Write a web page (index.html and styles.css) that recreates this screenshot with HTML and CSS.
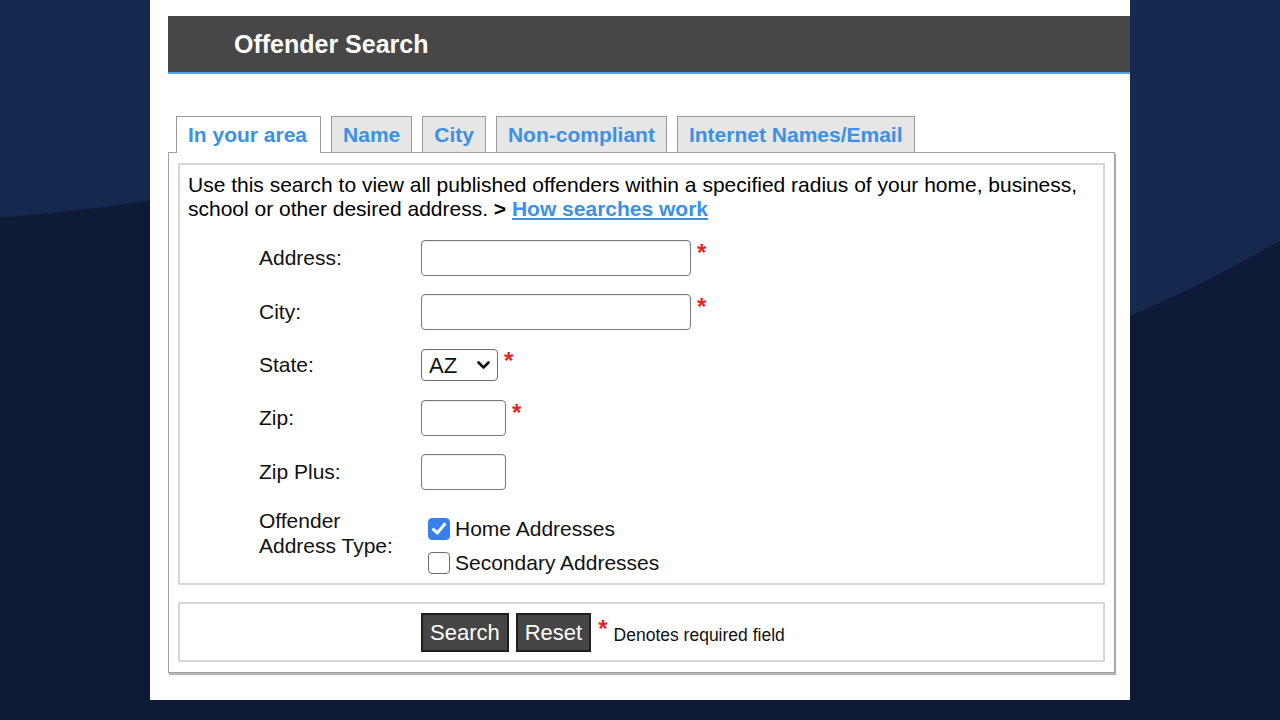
FILE: index.html
```html
<!DOCTYPE html>
<html lang="en">
<head>
    <meta charset="UTF-8">
    <meta name="viewport" content="width=device-width, initial-scale=1.0">
    <title>Offender Search</title>
    <link rel="stylesheet" href="styles.css">
</head>
<body>
    <div class="page">
        <!-- Header -->
        <div class="header">
            <h1>Offender Search</h1>
        </div>

        <!-- Tabs -->
        <div class="tabs">
            <a class="tab active" href="#">In your area</a>
            <a class="tab" href="#">Name</a>
            <a class="tab" href="#">City</a>
            <a class="tab" href="#">Non-compliant</a>
            <a class="tab" href="#">Internet Names/Email</a>
        </div>

        <!-- Search Box -->
        <form class="search-box" onsubmit="return false">
            <div class="section">
                <p class="intro">Use this search to view all published offenders within a specified radius of your home, business, school or other desired address. <b>&gt;</b>&nbsp;<a href="#">How searches work</a></p>

                <div class="form-grid">
                    <label for="address">Address:</label>
                    <div class="field">
                        <input type="text" id="address" class="input-wide">
                        <span class="req">*</span>
                    </div>

                    <label for="city">City:</label>
                    <div class="field">
                        <input type="text" id="city" class="input-wide">
                        <span class="req">*</span>
                    </div>

                    <label for="state">State:</label>
                    <div class="field field-state">
                        <span class="select-wrap">
                            <select id="state">
                                <option>AZ</option>
                            </select>
                            <svg class="chevron" width="13" height="9" viewBox="0 0 13 9">
                                <path d="M1.5 1.5 L6.5 6.5 L11.5 1.5" fill="none" stroke="#111" stroke-width="2.6" stroke-linecap="round" stroke-linejoin="round"/>
                            </svg>
                        </span>
                        <span class="req">*</span>
                    </div>

                    <label for="zip">Zip:</label>
                    <div class="field">
                        <input type="text" id="zip" class="input-short">
                        <span class="req">*</span>
                    </div>

                    <label for="zipplus">Zip Plus:</label>
                    <div class="field">
                        <input type="text" id="zipplus" class="input-short">
                    </div>

                    <label class="label-top">Offender<br>Address Type:</label>
                    <div class="checks">
                        <label class="check"><input type="checkbox" checked> Home Addresses</label>
                        <label class="check"><input type="checkbox"> Secondary Addresses</label>
                    </div>
                </div>
            </div>

            <div class="section actions">
                <button type="submit" class="btn">Search</button>
                <button type="reset" class="btn">Reset</button>
                <span class="req">*</span>
                <span class="note">Denotes required field</span>
            </div>
        </form>
    </div>
</body>
</html>
```

FILE: styles.css
```css
body {
    margin: 0;
    height: 720px;
    overflow: hidden;
    font-family: "Liberation Sans", Arial, sans-serif;
    background-color: #0e1b36;
    background-image:
        radial-gradient(circle 2000px at -150px -1776px, #15284d 99.9%, transparent 100%),
        radial-gradient(circle 1300px at -506px -881px, #15284d 99.9%, transparent 100%);
    background-size: 150px 100%, 150px 100%;
    background-position: left top, right top;
    background-repeat: no-repeat;
}

.page {
    width: 962px;
    height: 684px;
    margin-left: 150px;
    padding: 16px 0 0 18px;
    background: white;
}

/* Header */
.header {
    height: 56px;
    background: #474747;
    border-bottom: 2px solid #57a3ea;
    display: flex;
    align-items: center;
    padding-left: 66px;
}

.header h1 {
    margin: 0;
    color: white;
    font-size: 25px;
    font-weight: bold;
}

/* Tabs */
.tabs {
    display: flex;
    gap: 10px;
    margin: 42px 0 0 8px;
    position: relative;
    z-index: 1;
}

.tab {
    height: 35px;
    padding: 0 11px;
    display: flex;
    align-items: center;
    background: #e6e6e6;
    border: 1px solid #9a9a9a;
    border-bottom: none;
    color: #3c91e6;
    font-size: 21px;
    font-weight: bold;
    text-decoration: none;
}

.tab.active {
    background: white;
    height: 36px;
    margin-bottom: -1px;
    padding: 0 13px 0 11px;
}

/* Search Box */
.search-box {
    width: 927px;
    margin: 0;
    padding: 10px 9px;
    border: 1px solid #a0a0a0;
    box-shadow: 1px 2px 1px #b5b5b5;
    display: flex;
    flex-direction: column;
    gap: 17px;
}

.section {
    border: 2px solid #d6d6d6;
}

.intro {
    margin: 0;
    padding: 8px 8px 0;
    font-size: 21px;
    line-height: 24px;
    color: #000;
}

.intro a {
    color: #3c91e6;
    font-weight: bold;
}

.form-grid {
    display: grid;
    grid-template-columns: 162px 1fr;
    row-gap: 18px;
    align-items: center;
    margin: 19px 0 0 79px;
    padding-bottom: 3px;
    font-size: 21px;
    color: #111;
}

.form-grid > label {
    line-height: 24px;
}

.form-grid .label-top {
    align-self: start;
    line-height: 25px;
}

.field {
    display: flex;
    align-items: flex-start;
}

.field-state {
    min-height: 34px;
    align-items: center;
}

.field input {
    height: 36px;
    box-sizing: border-box;
    border: 1px solid #7a7a7a;
    border-radius: 4px;
    box-shadow: inset 0 1px 1px rgba(0, 0, 0, 0.08);
    font-size: 18px;
    padding: 0 6px;
}

.input-wide {
    width: 270px;
}

.input-short {
    width: 85px;
}

.req {
    color: #e0261f;
    font-size: 24px;
    font-weight: bold;
    line-height: 1;
    margin-left: 6px;
    margin-top: 1px;
}

.field-state .req {
    align-self: flex-start;
}

.select-wrap {
    position: relative;
    display: inline-flex;
}

.select-wrap select {
    appearance: none;
    -webkit-appearance: none;
    width: 77px;
    height: 32px;
    border: 1px solid #6f6f6f;
    border-radius: 4px;
    background: white;
    font-family: "Liberation Sans", Arial, sans-serif;
    font-size: 22px;
    color: #111;
    padding: 0 0 0 7px;
}

.chevron {
    position: absolute;
    right: 8px;
    top: 12px;
    pointer-events: none;
}

/* Checkboxes */
.checks {
    display: flex;
    flex-direction: column;
    padding: 4px 0 0 7px;
}

.check {
    height: 34px;
    display: flex;
    align-items: center;
    gap: 5px;
    color: #111;
}

.check input {
    appearance: none;
    -webkit-appearance: none;
    margin: 0;
    width: 22px;
    height: 22px;
    border: 1.5px solid #6d6d6d;
    border-radius: 4px;
    background: white;
    position: relative;
    box-sizing: border-box;
}

.check input:checked {
    background: #3581ef;
    border-color: #3581ef;
}

.check input:checked::after {
    content: "";
    position: absolute;
    left: 6px;
    top: 1px;
    width: 5px;
    height: 11px;
    border-right: 3px solid white;
    border-bottom: 3px solid white;
    transform: rotate(40deg);
}

/* Buttons */
.actions {
    display: flex;
    align-items: center;
    padding: 9px 0 8px 241px;
}

.btn {
    height: 39px;
    padding: 0 7px;
    margin-right: 7px;
    background: #454545;
    color: white;
    border: 2px solid #1f1f1f;
    font-family: "Liberation Sans", Arial, sans-serif;
    font-size: 22px;
    cursor: pointer;
}

.actions .req {
    align-self: flex-start;
    margin: 4px 6px 0 0;
}

.note {
    font-size: 17.5px;
    color: #111;
    margin-top: 6px;
}
```
